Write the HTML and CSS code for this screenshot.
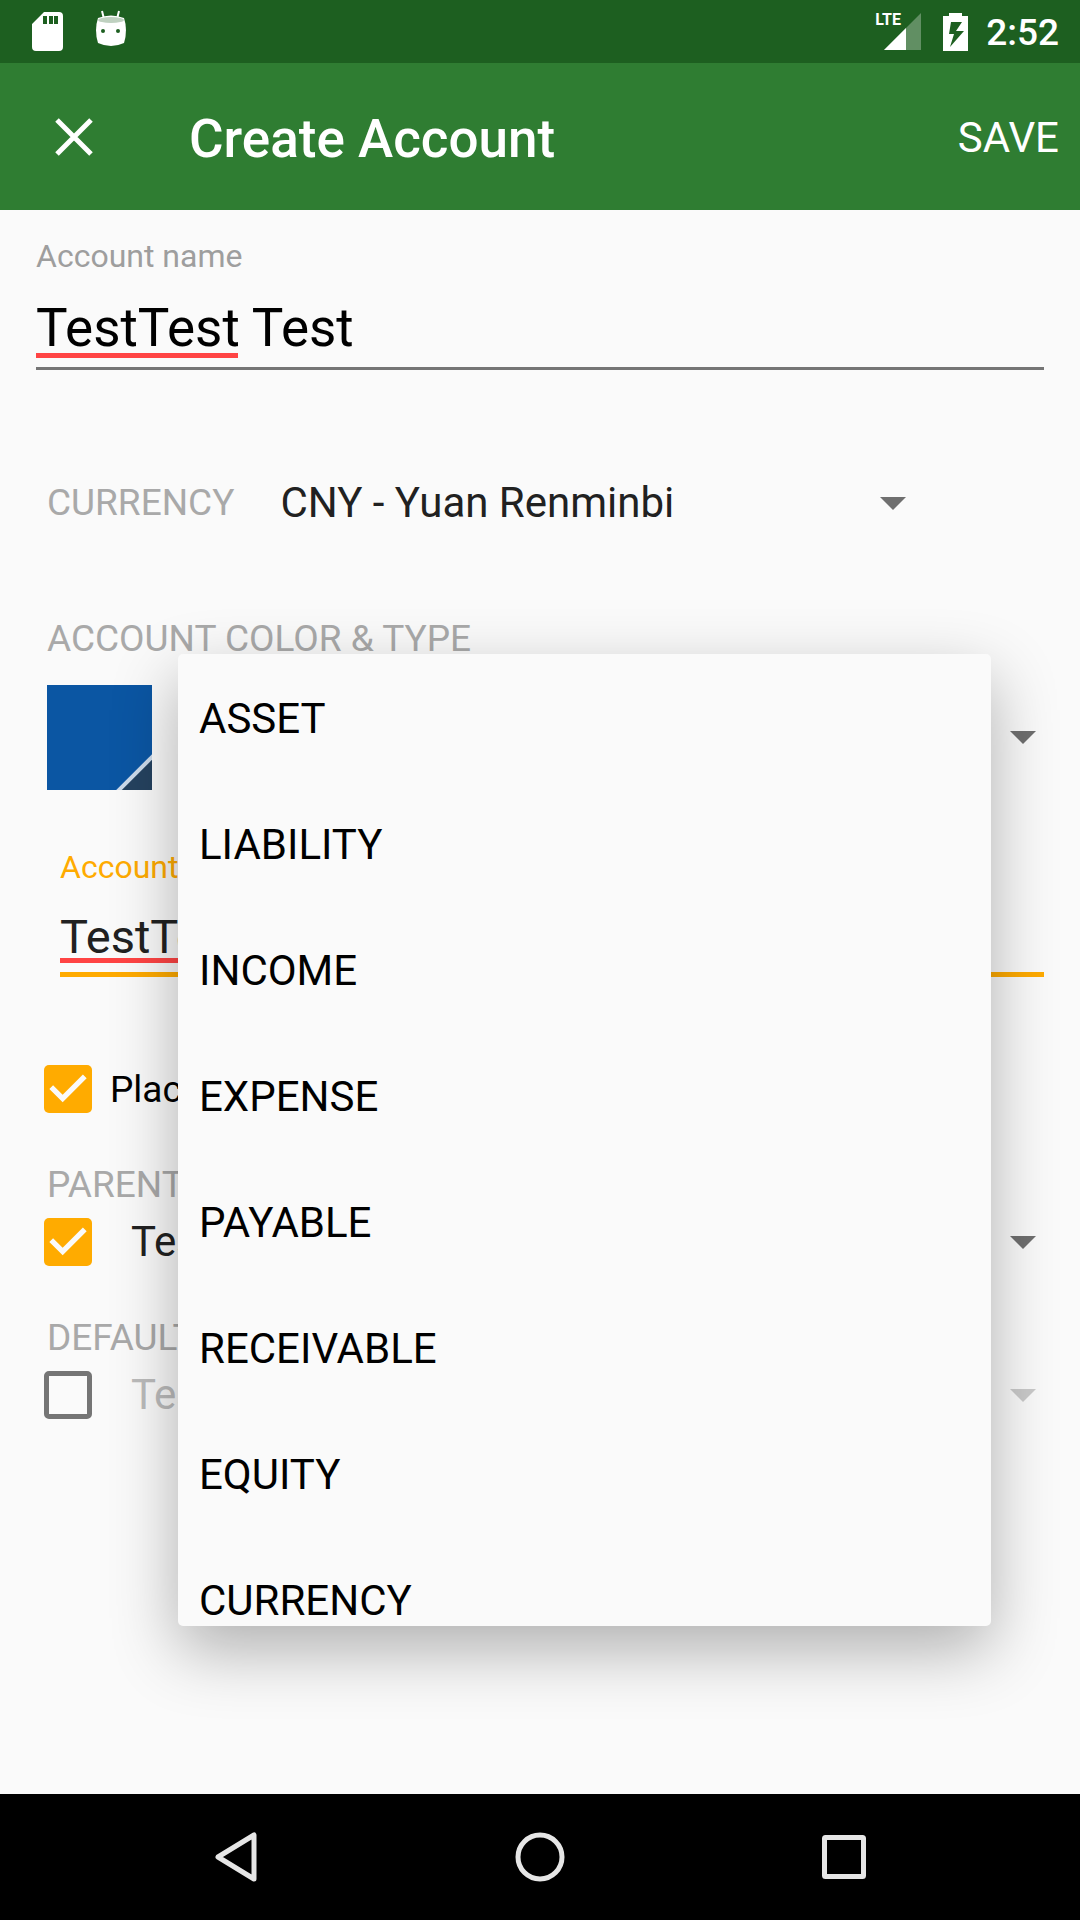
FILE: index.html
```html
<!DOCTYPE html>
<html lang="en">
<head>
<meta charset="utf-8">
<meta name="viewport" content="width=device-width, initial-scale=1">
<title>Create Account</title>
<link rel="stylesheet" href="styles.css">
</head>
<body>
<div class="screen">
  <div class="status-bar">
    <div class="status-icons">
      <svg class="status-icon" width="32" height="40" viewBox="0 0 32 40" aria-hidden="true">
        <path fill="#fff" fill-rule="evenodd" d="M12 0h15q4 0 4 4v31q0 4-4 4H4q-4 0-4-4V12zM11 4v8h4V4zM17 4v8h4V4zM22 4v8h4V4z"/>
      </svg>
      <svg class="status-icon" width="32" height="40" viewBox="0 0 32 40" aria-hidden="true">
        <path d="M7 -1l2 8M24 -1l-2 8" stroke="#fff" stroke-width="2" fill="none"/>
        <path fill="#fff" d="M3 6Q16 1 29 6Q33 18 29 31Q16 37 3 31Q-1 18 3 6z"/>
        <ellipse cx="16" cy="8" rx="13" ry="3" fill="#bfd1c0"/>
        <circle cx="8" cy="19" r="2" fill="#1d5f20"/>
        <circle cx="23" cy="19" r="2" fill="#1d5f20"/>
      </svg>
    </div>
    <div class="status-icons status-right">
      <div class="signal">
        <span class="signal-type">LTE</span>
        <svg width="37" height="37" viewBox="0 0 37 37" aria-hidden="true">
          <path fill="#fff" fill-opacity=".3" d="M0 37L37 0v37z"/>
          <path fill="#fff" d="M0 37L22 15v22z"/>
        </svg>
      </div>
      <svg width="25" height="38" viewBox="0 0 25 38" aria-hidden="true">
        <path fill="#fff" fill-rule="evenodd" d="M6 0h13v3h6v35H0V3h6zM8 9L6 21h5L7 34 21 18h-8l6-9z"/>
      </svg>
      <time class="clock">2:52</time>
    </div>
  </div>

  <header class="app-bar">
    <button class="icon-button" type="button" aria-label="Close">
      <svg width="38" height="38" viewBox="0 0 38 38" aria-hidden="true">
        <path d="M2 2l34 34M36 2L2 36" stroke="#fff" stroke-width="5"/>
      </svg>
    </button>
    <h1 class="title">Create Account</h1>
    <button class="save" type="submit" form="account-form">SAVE</button>
  </header>

  <form class="form" id="account-form">
    <div class="field">
      <label class="field-label" for="name">Account name</label>
      <input class="field-input name-input" id="name" type="text" value="TestTest Test" spellcheck="false">
    </div>

    <div class="currency-row">
      <label class="caption" for="currency">CURRENCY</label>
      <div class="spinner currency-spinner">
        <select id="currency"><option>CNY - Yuan Renminbi</option></select>
        <svg class="arrow" width="26" height="13" viewBox="0 0 26 13" aria-hidden="true"><path d="M0 0h26L13 13z"/></svg>
      </div>
    </div>

    <label class="caption type-caption" for="type">ACCOUNT COLOR &amp; TYPE</label>
    <div class="type-row">
      <button class="swatch" type="button" aria-label="Account color">
        <svg width="105" height="105" viewBox="0 0 105 105" aria-hidden="true">
          <path fill="#0b56a3" d="M0 0h105v105H0z"/>
          <path fill="#25425f" d="M105 73v32H73z"/>
          <path d="M70 107l37-37" stroke="#cddbeb" stroke-width="4"/>
        </svg>
      </button>
      <div class="spinner type-spinner">
        <select id="type"><option>ASSET</option></select>
        <svg class="arrow" width="26" height="13" viewBox="0 0 26 13" aria-hidden="true"><path d="M0 0h26L13 13z"/></svg>
      </div>
      <ul class="menu" role="listbox" aria-label="Account type">
        <li role="option">ASSET</li>
        <li role="option">LIABILITY</li>
        <li role="option">INCOME</li>
        <li role="option">EXPENSE</li>
        <li role="option">PAYABLE</li>
        <li role="option">RECEIVABLE</li>
        <li role="option">EQUITY</li>
        <li role="option">CURRENCY</li>
      </ul>
    </div>

    <div class="field description">
      <label class="field-label accent" for="description">Account description</label>
      <input class="field-input description-input" id="description" type="text" value="TestTest Test" spellcheck="false">
    </div>

    <div class="check-row placeholder-row">
      <input class="checkbox" id="placeholder" type="checkbox" checked>
      <label class="check-label" for="placeholder">Placeholder account</label>
    </div>

    <label class="caption section-caption" for="parent">PARENT ACCOUNT</label>
    <div class="check-row">
      <input class="checkbox" type="checkbox" aria-label="Use parent account" checked>
      <div class="spinner account-spinner">
        <select id="parent"><option>Test</option></select>
        <svg class="arrow" width="26" height="13" viewBox="0 0 26 13" aria-hidden="true"><path d="M0 0h26L13 13z"/></svg>
      </div>
    </div>

    <label class="caption section-caption" for="transfer">DEFAULT TRANSFER ACCOUNT</label>
    <div class="check-row">
      <input class="checkbox" type="checkbox" aria-label="Use default transfer account">
      <div class="spinner account-spinner is-disabled">
        <select id="transfer" disabled><option>Test</option></select>
        <svg class="arrow" width="26" height="13" viewBox="0 0 26 13" aria-hidden="true"><path d="M0 0h26L13 13z"/></svg>
      </div>
    </div>
  </form>

  <nav class="nav-bar" aria-label="System">
    <button type="button" aria-label="Back">
      <svg width="50" height="50" viewBox="0 0 50 50" aria-hidden="true">
        <path d="M43 3v44L7 25z" fill="none" stroke="#e6e6e6" stroke-width="5" stroke-linejoin="round"/>
      </svg>
    </button>
    <button type="button" aria-label="Home">
      <svg width="50" height="50" viewBox="0 0 50 50" aria-hidden="true">
        <circle cx="25" cy="25" r="22" fill="none" stroke="#e6e6e6" stroke-width="5"/>
      </svg>
    </button>
    <button type="button" aria-label="Recent apps">
      <svg width="50" height="50" viewBox="0 0 50 50" aria-hidden="true">
        <rect x="5.500" y="5.500" width="39" height="39" rx="1" fill="none" stroke="#e6e6e6" stroke-width="5" stroke-linejoin="round"/>
      </svg>
    </button>
  </nav>
</div>
</body>
</html>
```
FILE: styles.css
```css
* {
  box-sizing: border-box;
}

body {
  margin: 0;
  font-family: Roboto, "Liberation Sans", sans-serif;
  color: #000;
  background: #fafafa;
}

button,
input,
select {
  margin: 0;
  padding: 0;
  border: 0;
  border-radius: 0;
  background: none;
  color: inherit;
  font: inherit;
  outline: none;
  appearance: none;
}

svg {
  display: block;
  flex: none;
  overflow: visible;
}

.swatch svg {
  overflow: hidden;
}

.screen {
  display: flex;
  flex-direction: column;
  min-height: 100vh;
}

/* Status bar */
.status-bar {
  display: flex;
  justify-content: space-between;
  align-items: center;
  height: 63px;
  padding: 0 21px 0 32px;
  background: #1d5f20;
  color: #fff;
}

.status-icons {
  display: flex;
  align-items: center;
  gap: 31px;
}

.status-right {
  gap: 22px;
}

.signal {
  display: flex;
  position: relative;
  padding-left: 9px;
}

.signal-type {
  position: absolute;
  left: 0;
  top: 0;
  font: bold 16px/14px "Liberation Sans Narrow", Roboto, sans-serif;
}

.clock {
  margin-left: -4px;
  padding-top: 2px;
  font-size: 37px;
  font-weight: 500;
  line-height: 44px;
}

/* App bar */
.app-bar {
  display: flex;
  align-items: center;
  height: 147px;
  padding-right: 21px;
  background: #2f7d32;
  color: #fff;
}

.icon-button {
  display: grid;
  place-items: center;
  width: 147px;
  height: 147px;
}

.title {
  flex: 1;
  margin: 0;
  padding: 4px 0 0 42px;
  font-size: 53px;
  font-weight: 500;
  line-height: 62px;
}

.save {
  padding-top: 2px;
  font-size: 42px;
  line-height: 50px;
}

/* Form */
.form {
  display: flex;
  flex-direction: column;
  flex: 1;
  padding: 28px 36px;
}

.field {
  display: flex;
  flex-direction: column;
  gap: 24px;
}

.field-label {
  font-size: 32px;
  line-height: 36px;
  color: #9e9e9e;
}

.accent {
  color: #ffab00;
}

/* The red gradient marks the misspelled first word. */
.field-input {
  width: 100%;
  padding-bottom: 9px;
  background: linear-gradient(#ff4444, #ff4444) no-repeat;
}

.name-input {
  height: 72px;
  border-bottom: 3px solid #757575;
  background-position: 0 55px;
  background-size: 202px 5px;
  font-size: 53px;
  line-height: 60px;
}

.description {
  margin-top: 59px;
  padding-left: 24px;
}

.description-input {
  height: 68px;
  border-bottom: 5px solid #ffab00;
  background-position: 0 49px;
  background-size: 182px 5px;
  color: #212121;
  font-size: 47px;
  line-height: 54px;
}

.caption {
  padding-left: 11px;
  font-size: 37px;
  line-height: 44px;
  color: #a9a9a9;
}

.type-caption {
  margin-top: 51px;
}

.section-caption {
  margin: 50px 0 11px;
}

.currency-row {
  display: flex;
  align-items: center;
  gap: 46px;
  height: 126px;
  margin-top: 70px;
}

/* Select and its arrow share one grid cell. */
.spinner {
  display: grid;
  align-items: center;
  flex: 1;
  padding-right: 8px;
  font-size: 42px;
  color: #212121;
}

.spinner select,
.arrow {
  grid-area: 1 / 1;
}

.spinner select {
  width: 100%;
  height: 50px;
  line-height: 50px;
  opacity: 1;
}

.arrow {
  justify-self: end;
  fill: #6f6f6f;
  pointer-events: none;
}

.currency-spinner {
  flex: 0 1 634px;
}

.is-disabled {
  color: #bcbcbc;
}

.is-disabled .arrow {
  fill: #cacaca;
}

.type-row {
  display: flex;
  position: relative;
  align-items: center;
  margin-top: 24px;
  padding-left: 11px;
}

.type-spinner {
  padding-left: 48px;
}

.menu {
  position: absolute;
  z-index: 1;
  top: -31px;
  left: 142px;
  right: 53px;
  max-height: 972px;
  margin: 0;
  padding: 0;
  overflow: hidden;
  border-radius: 5px;
  background: #fafafa;
  box-shadow: 0 24px 66px rgba(0, 0, 0, .3);
  list-style: none;
  font-size: 42px;
}

.menu li {
  height: 126px;
  padding-left: 21px;
  line-height: 130px;
}

.check-row {
  display: flex;
  align-items: center;
  height: 48px;
  padding-left: 8px;
}

.placeholder-row {
  margin-top: 88px;
}

.checkbox {
  flex: none;
  width: 48px;
  height: 48px;
  border: 5px solid #757575;
  border-radius: 5px;
}

.checkbox:checked {
  border: 0;
  background: #ffab00 url("data:image/svg+xml,%3Csvg xmlns='http://www.w3.org/2000/svg' viewBox='3 3 18 18'%3E%3Cpath fill='%23fafafa' d='M10 17l-5-5 1.410-1.410L10 14.170l7.590-7.590L19 8z'/%3E%3C/svg%3E") center / 48px 48px;
}

.check-label {
  padding: 2px 0 0 18px;
  font-size: 37px;
  line-height: 44px;
}

.account-spinner {
  padding-left: 39px;
}

/* System navigation */
.nav-bar {
  display: flex;
  justify-content: center;
  height: 126px;
  background: #000;
}

.nav-bar button {
  display: grid;
  place-items: center;
  width: 304px;
}
```
